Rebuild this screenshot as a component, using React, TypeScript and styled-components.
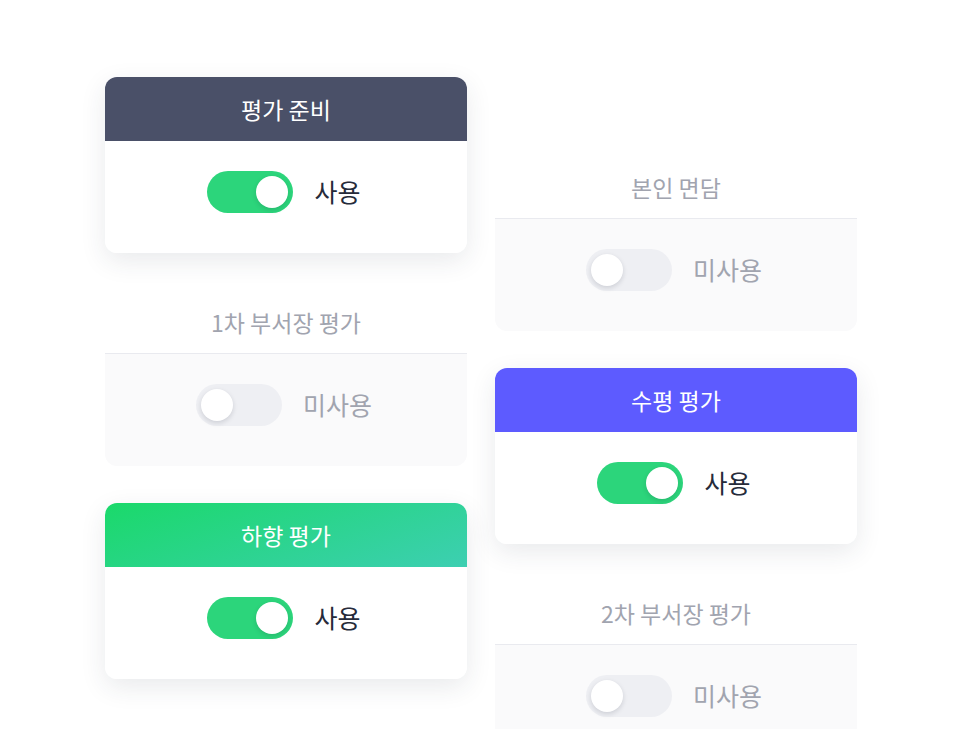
import React from "react";
import styled, { createGlobalStyle, css } from "styled-components";

type Step = {
  title: string;
  enabled: boolean;
  header?: string;
};

const leftSteps: Step[] = [
  { title: "평가 준비", enabled: true, header: "#4a5068" },
  { title: "1차 부서장 평가", enabled: false },
  { title: "하향 평가", enabled: true, header: "linear-gradient(160deg, #1ad96a 0%, #3dcfb2 100%)" },
];

const rightSteps: Step[] = [
  { title: "본인 면담", enabled: false },
  { title: "수평 평가", enabled: true, header: "#5d5bff" },
  { title: "2차 부서장 평가", enabled: false },
];

const StepCard: React.FC<{ step: Step }> = ({ step }) => (
  <Card $active={step.enabled}>
    <CardHeader $active={step.enabled} $bg={step.header}>
      {step.title}
    </CardHeader>
    <CardBody $active={step.enabled}>
      <Switch $on={step.enabled}>
        <Knob />
      </Switch>
      <Label $active={step.enabled}>{step.enabled ? "사용" : "미사용"}</Label>
    </CardBody>
  </Card>
);

const App: React.FC = () => (
  <>
    <GlobalStyle />
    <Page>
      <Column $offset={77}>
        {leftSteps.map((s) => (
          <StepCard key={s.title} step={s} />
        ))}
      </Column>
      <Column $offset={155}>
        {rightSteps.map((s) => (
          <StepCard key={s.title} step={s} />
        ))}
      </Column>
    </Page>
  </>
);

const GlobalStyle = createGlobalStyle`
  html, body {
    margin: 0;
    background: #ffffff;
    font-family: "Noto Sans CJK KR", "Noto Sans", sans-serif;
  }
`;

const Page = styled.div`
  display: flex;
  justify-content: center;
  gap: 28px;
  height: 729px;
  overflow: hidden;
  padding-left: 2px;
`;

const Column = styled.div<{ $offset: number }>`
  display: flex;
  flex-direction: column;
  gap: 37px;
  width: 362px;
  padding-top: ${({ $offset }) => $offset}px;
`;

const Card = styled.div<{ $active: boolean }>`
  display: flex;
  flex-direction: column;
  height: 176px;
  flex-shrink: 0;
  border-radius: 12px;
  overflow: hidden;
  ${({ $active }) =>
    $active &&
    css`
      box-shadow: 0 8px 26px rgba(40, 50, 70, 0.1);
    `}
`;

const CardHeader = styled.div<{ $active: boolean; $bg?: string }>`
  height: 64px;
  flex-shrink: 0;
  display: flex;
  align-items: center;
  justify-content: center;
  font-size: 23px;
  font-weight: 400;
  box-sizing: border-box;
  ${({ $active, $bg }) =>
    $active
      ? css`
          background: ${$bg};
          color: #ffffff;
        `
      : css`
          background: #ffffff;
          color: #a1a4af;
          border-bottom: 1px solid #e9eaef;
        `}
`;

const CardBody = styled.div<{ $active: boolean }>`
  flex: 1;
  display: flex;
  align-items: center;
  justify-content: center;
  gap: 21px;
  padding-bottom: 10px;
  padding-right: 4px;
  background: ${({ $active }) => ($active ? "#ffffff" : "#fafafb")};
`;

const Switch = styled.div<{ $on: boolean }>`
  width: 86px;
  height: 42px;
  border-radius: 21px;
  padding: 5px;
  box-sizing: border-box;
  display: flex;
  justify-content: ${({ $on }) => ($on ? "flex-end" : "flex-start")};
  background: ${({ $on }) => ($on ? "#2cd57b" : "#eeeff3")};
`;

const Knob = styled.div`
  width: 32px;
  height: 32px;
  border-radius: 50%;
  background: #ffffff;
  box-shadow: 0 2px 5px rgba(20, 30, 50, 0.15);
`;

const Label = styled.span<{ $active: boolean }>`
  font-size: 25px;
  font-weight: 400;
  color: ${({ $active }) => ($active ? "#262b3a" : "#a1a4af")};
  margin-top: -2px;
`;

export default App;
